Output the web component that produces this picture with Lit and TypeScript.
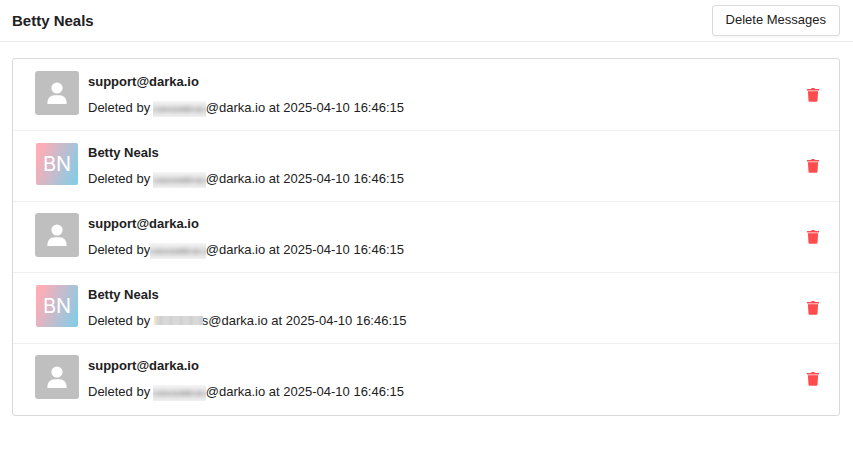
import { LitElement, html, css, svg } from "lit";
import { customElement, property } from "lit/decorators.js";
import { classMap } from "lit/directives/class-map.js";

type Mask = "normal" | "wide" | "short";

interface DeletedMessage {
  author: string;
  initials?: string;
  mask: Mask;
  domain: string;
  time: string;
}

const MESSAGES: DeletedMessage[] = [
  { author: "support@darka.io", mask: "normal", domain: "@darka.io", time: "2025-04-10 16:46:15" },
  { author: "Betty Neals", initials: "BN", mask: "normal", domain: "@darka.io", time: "2025-04-10 16:46:15" },
  { author: "support@darka.io", mask: "wide", domain: "@darka.io", time: "2025-04-10 16:46:15" },
  { author: "Betty Neals", initials: "BN", mask: "short", domain: "s@darka.io", time: "2025-04-10 16:46:15" },
  { author: "support@darka.io", mask: "normal", domain: "@darka.io", time: "2025-04-10 16:46:15" },
];

const personIcon = svg`
  <circle cx="10" cy="6" r="5.6" />
  <path d="M.4 22v-1.2C.4 16.300 3.400 13.200 7.600 13.200h4.800c4.200 0 7.200 3.100 7.200 7.600V22z" />
`;

const trashIcon = svg`
  <path d="M0 1h4l.7-1h2.600l.7 1h4v1.400H0z" />
  <path class="lid" d="M1 2.400h10v1H1z" />
  <path d="M.9 3.200h10.200l-.6 9.600q-.1 .9-1 .9H2.500q-.9 0-1-.9z" />
`;

@customElement("user-avatar")
class UserAvatar extends LitElement {
  @property() initials = "";

  static styles = css`
    :host {
      display: flex;
      flex: none;
      width: 44px;
      height: 44px;
      align-items: center;
      justify-content: center;
    }
    .tile {
      display: flex;
      align-items: center;
      justify-content: center;
      width: 44px;
      height: 44px;
      border-radius: 3px;
      background: #bfbfbf;
    }
    .tile.letters {
      width: 42px;
      height: 42px;
      border-radius: 2px;
      background: linear-gradient(110deg, #ffadb5 10%, #8acbe4 90%);
      color: #fff;
      font: 20px/42px Inter, "Liberation Sans", sans-serif;
    }
    .person {
      width: 20px;
      height: 22px;
      fill: #fff;
    }
  `;

  render() {
    return html`<div class=${classMap({ tile: true, letters: !!this.initials })}>
      ${this.initials
        ? this.initials
        : html`<svg class="person" viewBox="0 0 20 22" aria-hidden="true">${personIcon}</svg>`}
    </div>`;
  }
}

@customElement("message-row")
class MessageRow extends LitElement {
  @property({ attribute: false }) message!: DeletedMessage;

  static styles = css`
    :host {
      display: flex;
      align-items: flex-start;
      gap: 9px;
      padding: 11px 20px 0 22px;
    }
    .body {
      flex: 1;
      min-width: 0;
      padding-top: 1px;
    }
    .author,
    .detail {
      margin: 0;
      font-size: 13px;
      line-height: 20px;
    }
    .author {
      font-weight: 700;
    }
    .detail {
      display: flex;
      margin-top: 6px;
      white-space: pre;
    }
    .mask {
      position: relative;
      width: 52px;
      height: 20px;
    }
    .mask::before {
      content: "";
      position: absolute;
      inset: 3px 0 1px -1px;
      background:
        radial-gradient(ellipse at center, #00000014, transparent 70%) 0 3px / 20px 11px no-repeat,
        radial-gradient(ellipse at center, #00000012, transparent 70%) 12px 3px / 22px 11px no-repeat,
        radial-gradient(ellipse at center, #0000001a, transparent 70%) 24px 2px / 20px 12px no-repeat,
        radial-gradient(ellipse at center, #00000014, transparent 70%) 40px 3px / 12px 11px no-repeat,
        linear-gradient(#f6f6f6, #d4d4d4 55%, #f0f0f0);
    }
    .mask.wide::before {
      left: -4px;
    }
    .mask.short {
      width: 48px;
    }
    .mask.short::before {
      inset: 5px -1px 6px 0;
      background:
        linear-gradient(90deg, #fbe3bd 1px, transparent 3px),
        repeating-linear-gradient(90deg, #d8d8d8 0 4px, #cfcfcf 7px, #d8d8d8 10px);
    }
    .remove {
      display: flex;
      align-items: center;
      justify-content: center;
      width: 12px;
      height: 14px;
      margin-top: 17px;
      padding: 0;
      border: 0;
      background: none;
      cursor: pointer;
    }
    .trash {
      width: 12px;
      height: 14px;
      fill: #ff4d4f;
    }
    .lid {
      fill: #ffa5a6;
    }
  `;

  render() {
    const m = this.message;
    return html`
      <user-avatar .initials=${m.initials ?? ""}></user-avatar>
      <div class="body">
        <p class="author">${m.author}</p>
        <p class="detail"><span>Deleted by </span><span class="mask ${m.mask}"></span><span>${m.domain} at ${m.time}</span></p>
      </div>
      <button class="remove" type="button" aria-label="Delete">
        <svg class="trash" viewBox="0 0 12 14" aria-hidden="true">${trashIcon}</svg>
      </button>
    `;
  }
}

@customElement("app-root")
class AppRoot extends LitElement {
  static styles = css`
    :host {
      display: block;
      background: #fff;
      color: #212121;
      font-family: "Liberation Sans", Arial, sans-serif;
    }
    .header {
      display: flex;
      align-items: center;
      justify-content: space-between;
      padding: 5px 13px 5px 12px;
      border-bottom: 1px solid #ebebeb;
    }
    .title {
      margin: 0;
      font-size: 15px;
      line-height: 20px;
      font-weight: 700;
    }
    .clear {
      padding: 3px 13px 5px;
      border: 1px solid #d9d9d9;
      border-radius: 3px;
      background: #fff;
      box-shadow: 0 2px 0 rgba(0, 0, 0, 0.02);
      color: inherit;
      font: 13px/21px "Liberation Sans", Arial, sans-serif;
      cursor: pointer;
    }
    .list {
      margin: 16px 13px 0 12px;
      padding: 1px 0 0;
      border: 1px solid #d9d9d9;
      border-radius: 3px;
      list-style: none;
    }
    .item {
      box-sizing: border-box;
      min-height: 71px;
      border-bottom: 1px solid #f0f0f0;
    }
    .item:last-child {
      border-bottom: 0;
    }
  `;

  render() {
    return html`
      <header class="header">
        <h1 class="title">Betty Neals</h1>
        <button class="clear" type="button">Delete Messages</button>
      </header>
      <ul class="list">
        ${MESSAGES.map((m) => html`<li class="item"><message-row .message=${m}></message-row></li>`)}
      </ul>
    `;
  }
}
